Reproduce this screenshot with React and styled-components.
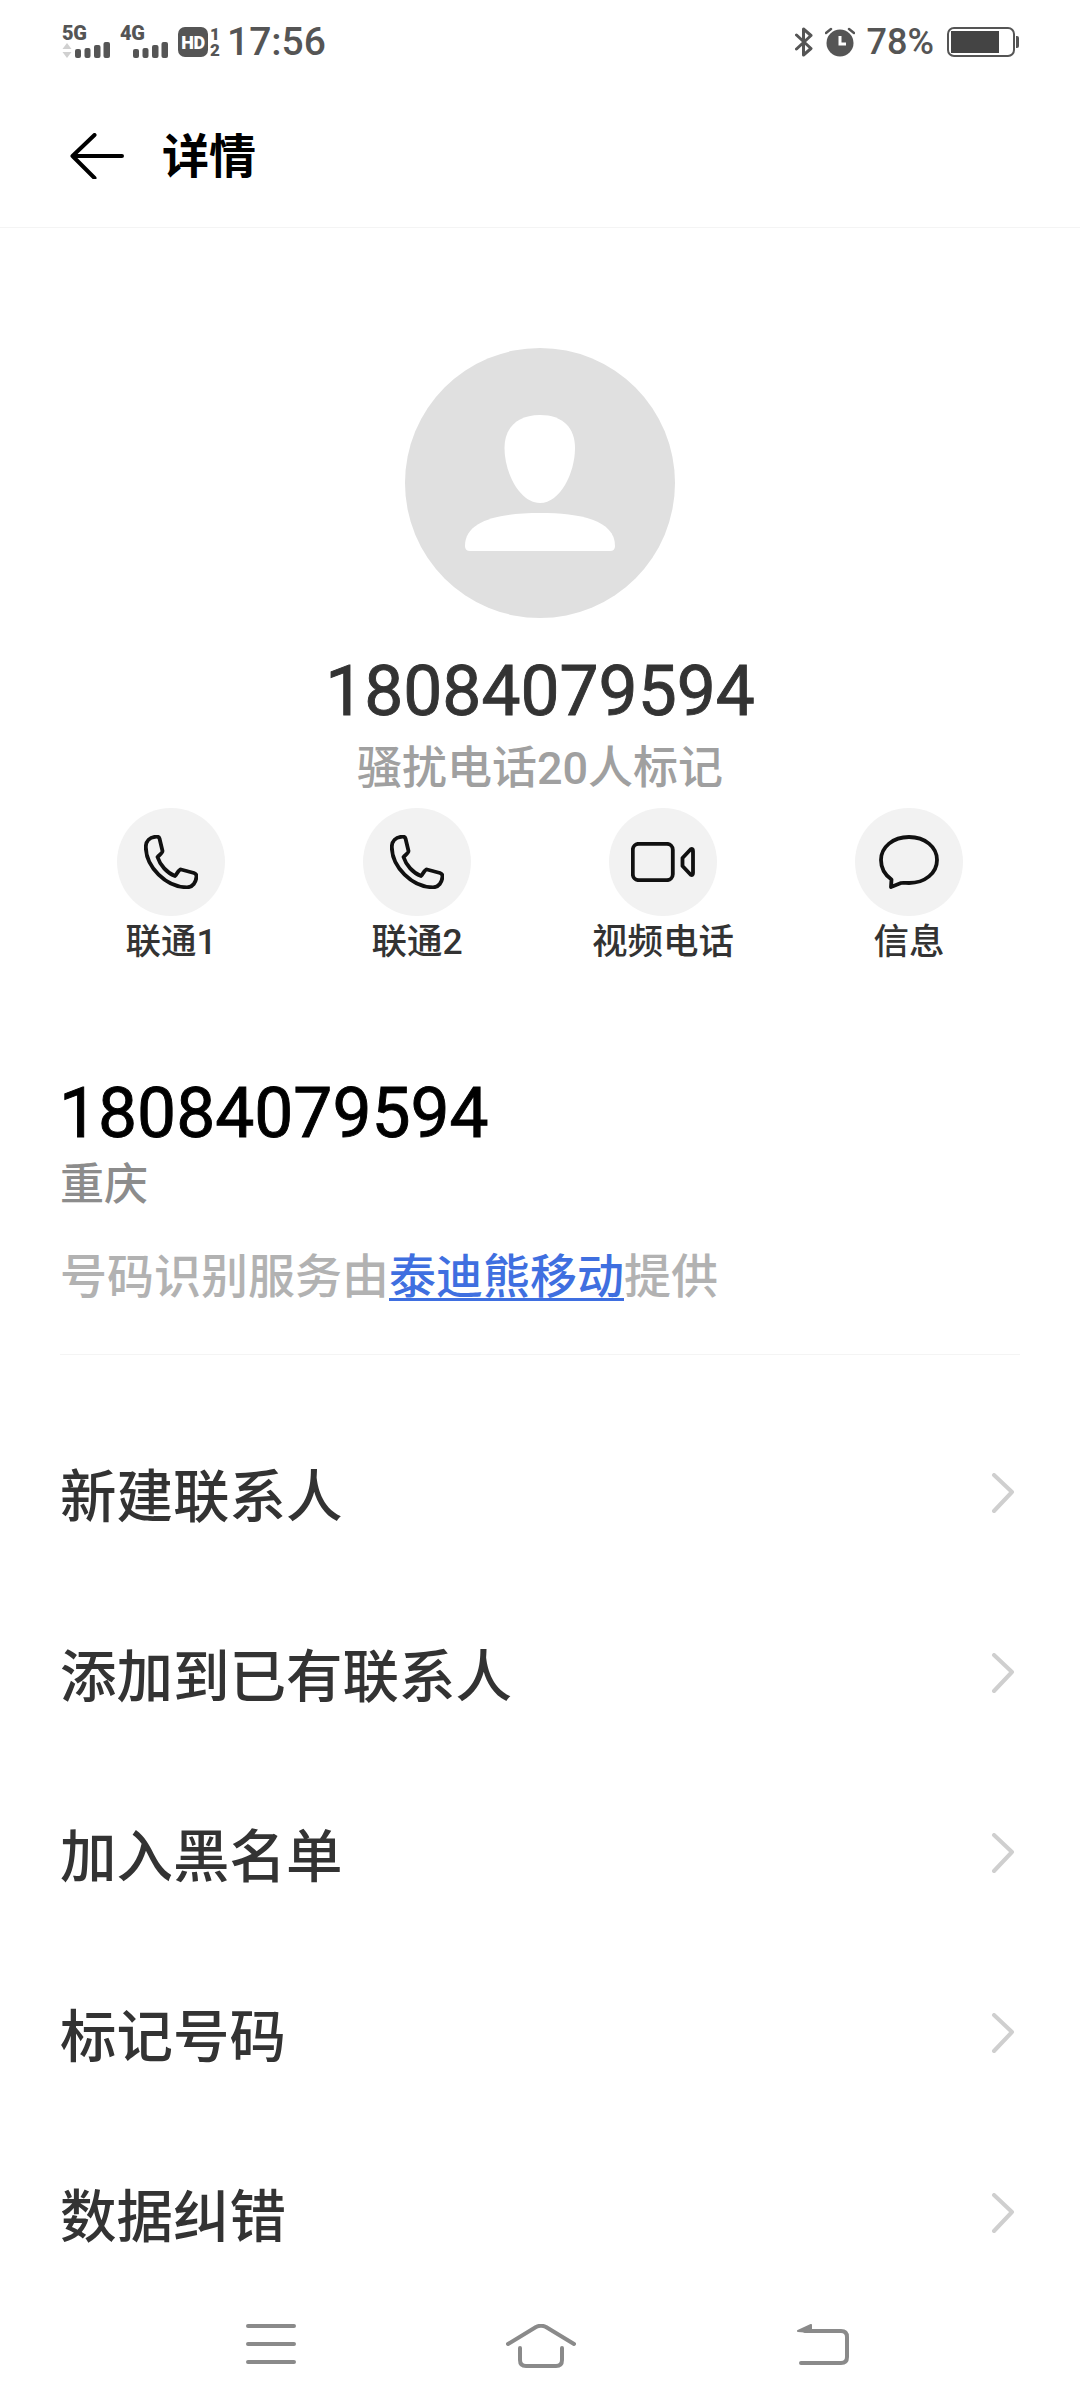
import React from "react";
import styled, { createGlobalStyle } from "styled-components";

const FONT = `Roboto, "Noto Sans CJK SC", sans-serif`;

const GlobalStyle = createGlobalStyle`
  html, body {
    margin: 0;
    padding: 0;
    background: #fff;
  }
  * {
    box-sizing: border-box;
  }
`;

const Page = styled.div`
  width: 1080px;
  height: 2408px;
  display: flex;
  flex-direction: column;
  overflow: hidden;
  background: #fff;
  font-family: ${FONT};
`;

const StatusBar = styled.div`
  height: 84px;
  flex: none;
  display: flex;
  align-items: center;
  justify-content: space-between;
  padding: 0 61px 0 62px;
  color: #555;
`;

const StatusGroup = styled.div`
  display: flex;
  align-items: center;
`;

const Signal = styled.div`
  width: 48px;
  margin-right: 10px;
  display: flex;
  flex-direction: column;
  margin-top: -1px;
`;

const SignalLabel = styled.span`
  font-size: 20px;
  font-weight: 900;
  line-height: 14px;
  letter-spacing: -0.3px;
`;

const SignalRow = styled.div`
  display: flex;
  align-items: flex-end;
  justify-content: ${(p) => (p.$end ? "flex-end" : "space-between")};
  margin-top: 2px;
  height: 16px;
`;

const HdBadge = styled.span`
  width: 30px;
  height: 30px;
  border-radius: 7px;
  background: #555;
  color: #fff;
  display: flex;
  align-items: center;
  justify-content: center;
  font-size: 18px;
  font-weight: 900;
  letter-spacing: -0.5px;
`;

const SimSlots = styled.div`
  width: 12px;
  margin: 0 6px 0 1px;
  display: flex;
  flex-direction: column;
  align-items: center;
  font-size: 17px;
  font-weight: 900;
  line-height: 16px;
`;

const Clock = styled.span`
  font-size: 39px;
  font-weight: 500;
  line-height: 44px;
`;

const Percent = styled.span`
  font-size: 36px;
  font-weight: 500;
  line-height: 40px;
  margin: 0 13px 0 12px;
`;

const Header = styled.div`
  height: 144px;
  flex: none;
  display: flex;
  align-items: center;
  padding: 0 0 0 70px;
  border-bottom: 1px solid #f4f4f4;
`;

const Title = styled.h1`
  margin: 2px 0 0 38px;
  font-size: 47px;
  line-height: 56px;
  font-weight: 700;
  color: #000;
`;

const Main = styled.div`
  flex: 1;
  min-height: 0;
  overflow: hidden;
  padding-top: 120px;
`;

const Profile = styled.div`
  display: flex;
  flex-direction: column;
  align-items: center;
`;

const Avatar = styled.div`
  width: 270px;
  height: 270px;
  border-radius: 50%;
  background: #e0e0e0;
`;

const Number = styled.div`
  margin-top: 34px;
  font-size: 69.5px;
  font-weight: 400;
  -webkit-text-stroke: 0.9px #333;
  line-height: 80px;
  color: #333;
`;

const Tag = styled.div`
  margin-top: 9px;
  font-size: 45px;
  font-weight: 500;
  line-height: 56px;
  color: #a0a0a0;
`;

const Actions = styled.div`
  margin-top: 11px;
  padding: 0 0 0 48px;
  display: grid;
  grid-template-columns: repeat(4, 246px);
`;

const Action = styled.div`
  display: flex;
  flex-direction: column;
  align-items: center;
`;

const ActionCircle = styled.div`
  width: 108px;
  height: 108px;
  border-radius: 50%;
  background: #f2f2f2;
  display: flex;
  align-items: center;
  justify-content: center;
`;

const ActionLabel = styled.div`
  margin-top: 5px;
  font-size: 35.5px;
  font-weight: 500;
  line-height: 42px;
  color: #333;
`;

const Info = styled.div`
  margin: 111px 60px 0;
  padding-bottom: 47px;
  border-bottom: 1px solid #f4f4f4;
`;

const InfoNumber = styled.div`
  margin-left: -1px;
  font-size: 69.5px;
  font-weight: 400;
  -webkit-text-stroke: 0.9px #000;
  line-height: 80px;
  color: #000;
`;

const Region = styled.div`
  margin-top: 3px;
  font-size: 44px;
  font-weight: 500;
  line-height: 56px;
  color: #8c8c8c;
`;

const Provider = styled.div`
  margin-top: 34px;
  font-size: 47px;
  font-weight: 500;
  line-height: 60px;
  color: #b2b2b2;
`;

const ProviderLink = styled.a`
  color: #3f6fe0;
  text-decoration: underline;
  text-decoration-thickness: 3px;
  text-underline-offset: 5px;
`;

const Menu = styled.div`
  margin-top: 47px;
`;

const MenuRow = styled.div`
  height: 180px;
  padding: 0 65px 0 60px;
  display: flex;
  align-items: center;
  justify-content: space-between;
  font-size: 56.5px;
  font-weight: 500;
  color: #333;

  svg {
    margin-top: 1px;
  }
`;

const NavBar = styled.div`
  height: 118px;
  flex: none;
  background: #fff;
  display: flex;
  align-items: flex-start;
  padding: 34px 0 0 246px;
`;

const NavSlot = styled.div`
  display: flex;
  margin-left: ${(p) => p.$gap || 0}px;
`;

const Bars = () => (
  <svg width="35" height="16" viewBox="0 0 35 16" fill="#555">
    <rect x="0" y="7" width="6" height="9" rx="2" />
    <rect x="9.5" y="6" width="6" height="10" rx="2" />
    <rect x="19" y="3" width="6.5" height="13" rx="2" />
    <rect x="28.5" y="0" width="6.5" height="16" rx="2" />
  </svg>
);

const DataArrows = () => (
  <svg width="10" height="15" viewBox="0 0 10 15" fill="#d0d0d0">
    <path d="M5 0 L9.5 6 H0.5Z" />
    <path d="M5 15 L9.5 9 H0.5Z" />
  </svg>
);

const Bluetooth = () => (
  <svg width="18" height="30" viewBox="0 0 18 30" fill="none" stroke="#555" strokeWidth="3" strokeLinecap="round" strokeLinejoin="round">
    <path d="M1.5 8 L16 21.5 L8.5 28 V2 L16 8.5 L1.5 22" />
  </svg>
);

const Alarm = () => (
  <svg width="30" height="30" viewBox="0 0 30 30" style={{ marginLeft: 12 }}>
    <circle cx="15" cy="16" r="13.5" fill="#555" />
    <path d="M15 9 V17 H21" fill="none" stroke="#fff" strokeWidth="3" />
    <path d="M1 6 L6 2 M29 6 L24 2" stroke="#555" strokeWidth="2.5" strokeLinecap="round" />
  </svg>
);

const Battery = () => (
  <svg width="72" height="30" viewBox="0 0 72 30">
    <rect x="1" y="1" width="66" height="28" rx="6" fill="none" stroke="#555" strokeWidth="2" />
    <rect x="4" y="4" width="48" height="22" fill="#444" />
    <path d="M69 9 H70 Q72 9 72 11 V19 Q72 21 70 21 H69Z" fill="#555" />
  </svg>
);

const BackArrow = () => (
  <svg width="54" height="46" viewBox="0 0 54 46" fill="none" stroke="#000" strokeWidth="4" strokeLinecap="round" strokeLinejoin="round">
    <path d="M52 23 H2.5 M24.5 2 L2.5 23 L24.5 45" />
  </svg>
);

const Person = () => (
  <svg width="270" height="270" viewBox="0 0 270 270" fill="#fff">
    <path d="M135 67 C158 67 170 80 170 100 C170 125 155 155 135 155 C115 155 99.5 125 99.5 100 C99.5 80 112 67 135 67Z" />
    <path d="M135 165 C175 165 210 172 210 198 Q210 203 205 203 H65 Q60 203 60 198 C60 172 95 165 135 165Z" />
  </svg>
);

const PhoneIcon = () => (
  <svg width="54" height="54" viewBox="0 0 54 54" fill="none" stroke="#111" strokeWidth="3.8" strokeLinejoin="round">
    <path d="M11 1.8 C13 1.4 15 1.8 15.5 3.5 L18.5 16 C18.8 17.5 16 19.5 13.5 22 C16 30 23 38 31 41 C33 39 35 34 37 34.5 L50 38 C52 38.7 52.7 40 52.4 42 C52 47 49 52.3 43 52.3 C22 52 2 32 1.8 12 C1.8 6 6 2.4 11 1.8Z" />
  </svg>
);

const VideoIcon = () => (
  <svg width="64" height="40" viewBox="0 0 64 40" fill="none" stroke="#111" strokeWidth="3.8" strokeLinejoin="round">
    <rect x="1.8" y="1.8" width="40" height="36.4" rx="6" />
    <path d="M51.5 16 L59.5 7.5 Q62 6 62 9 V31 Q62 34 59.5 32.5 L51.5 24Z" />
  </svg>
);

const ChatIcon = () => (
  <svg width="60" height="54" viewBox="0 0 60 54" fill="none" stroke="#111" strokeWidth="3.8" strokeLinejoin="round">
    <path d="M12 52 L12.5 44.5 C6 40 2 33 2 25 C2 12 14 2 30 2 C46 2 58 12 58 25 C58 38 46 48 30 48 C27 48 24 47.5 22 48Z" />
  </svg>
);

const Chevron = () => (
  <svg width="24" height="40" viewBox="0 0 24 40" fill="none" stroke="#cfcfcf" strokeWidth="4" strokeLinecap="round" strokeLinejoin="round">
    <path d="M3 2 L21 19 L3 38" />
  </svg>
);

const MenuIcon = () => (
  <svg width="50" height="40" viewBox="0 0 50 40" fill="none" stroke="#8a8a8a" strokeWidth="4" strokeLinecap="round">
    <path d="M2 2 H48 M2 20 H48 M2 38 H48" />
  </svg>
);

const HomeIcon = () => (
  <svg width="70" height="44" viewBox="0 0 70 44" fill="none" stroke="#8a8a8a" strokeWidth="4" strokeLinecap="round" strokeLinejoin="round">
    <path d="M2 20 L30 3 Q35 0.5 40 3 L68 20" />
    <path d="M14 24 V36 Q14 42 20 42 H50 Q56 42 56 36 V24" />
  </svg>
);

const ReturnIcon = () => (
  <svg width="52" height="42" viewBox="0 0 52 42" fill="none" stroke="#8a8a8a" strokeWidth="4" strokeLinecap="round" strokeLinejoin="round">
    <path d="M4 39 H44 Q50 39 50 33 V13 Q50 7 44 7 H8" />
    <path d="M1 7 L14 1 V8Z" fill="#8a8a8a" stroke="#8a8a8a" strokeWidth="2" />
  </svg>
);

const actions = [
  { label: "联通1", icon: <PhoneIcon /> },
  { label: "联通2", icon: <PhoneIcon /> },
  { label: "视频电话", icon: <VideoIcon /> },
  { label: "信息", icon: <ChatIcon /> },
];

const menuItems = ["新建联系人", "添加到已有联系人", "加入黑名单", "标记号码", "数据纠错"];

export default function App() {
  return (
    <Page>
      <GlobalStyle />
      <StatusBar>
        <StatusGroup>
          <Signal>
            <SignalLabel>5G</SignalLabel>
            <SignalRow>
              <DataArrows />
              <Bars />
            </SignalRow>
          </Signal>
          <Signal>
            <SignalLabel>4G</SignalLabel>
            <SignalRow $end>
              <Bars />
            </SignalRow>
          </Signal>
          <HdBadge>HD</HdBadge>
          <SimSlots>
            <span>1</span>
            <span>2</span>
          </SimSlots>
          <Clock>17:56</Clock>
        </StatusGroup>
        <StatusGroup>
          <Bluetooth />
          <Alarm />
          <Percent>78%</Percent>
          <Battery />
        </StatusGroup>
      </StatusBar>
      <Header>
        <BackArrow />
        <Title>详情</Title>
      </Header>
      <Main>
        <Profile>
          <Avatar>
            <Person />
          </Avatar>
          <Number>18084079594</Number>
          <Tag>骚扰电话20人标记</Tag>
        </Profile>
        <Actions>
          {actions.map((a) => (
            <Action key={a.label}>
              <ActionCircle>{a.icon}</ActionCircle>
              <ActionLabel>{a.label}</ActionLabel>
            </Action>
          ))}
        </Actions>
        <Info>
          <InfoNumber>18084079594</InfoNumber>
          <Region>重庆</Region>
          <Provider>
            号码识别服务由<ProviderLink>泰迪熊移动</ProviderLink>提供
          </Provider>
        </Info>
        <Menu>
          {menuItems.map((item) => (
            <MenuRow key={item}>
              {item}
              <Chevron />
            </MenuRow>
          ))}
        </Menu>
      </Main>
      <NavBar>
        <NavSlot>
          <MenuIcon />
        </NavSlot>
        <NavSlot $gap={210}>
          <HomeIcon />
        </NavSlot>
        <NavSlot $gap={221}>
          <ReturnIcon />
        </NavSlot>
      </NavBar>
    </Page>
  );
}
